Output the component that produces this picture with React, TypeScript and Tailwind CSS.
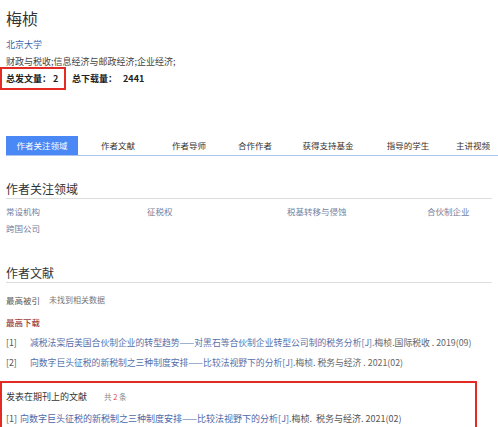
const tabs = [
  { t: '作者关注领域', w: 'w-[72px]' },
  { t: '作者文献', w: 'w-[80px]' },
  { t: '作者导师', w: 'w-[62px]' },
  { t: '合作作者', w: 'w-[70px]' },
  { t: '获得支持基金', w: 'w-[76px]' },
  { t: '指导的学生', w: 'w-[84px]' },
  { t: '主讲视频', w: 'w-[46px]' },
]

const fields = ['常设机构', '征税权', '税基转移与侵蚀', '合伙制企业', '跨国公司']

const downloads = [
  {
    n: '[1]',
    title: '减税法案后美国合伙制企业的转型趋势——对黑石等合伙制企业转型公司制的税务分析[J]. ',
    meta: '梅桢.国际税收 . 2019(09)',
  },
  {
    n: '[2]',
    title: '向数字巨头征税的新税制之三种制度安排——比较法视野下的分析[J]. ',
    meta: '梅桢. 税务与经济 . 2021(02)',
  },
]

export default function App() {
  return (
    <div
      className="relative w-[498px] h-[427px] overflow-hidden bg-white text-[#333]"
      style={{ fontFamily: '"Noto Sans CJK SC", "Noto Sans", sans-serif' }}
    >
      <div className="px-[6px]">
        <div className="h-[36px] flex items-center text-[16px] text-[#333]">梅桢</div>
        <div className="h-[18px] flex items-center text-[9px] text-[#3d62ad]">北京大学</div>
        <div className="h-[16px] flex items-center text-[9px] text-[#444]">
          财政与税收;信息经济与邮政经济;企业经济;
        </div>
        <div className="h-[18px] flex items-center text-[9px] font-bold text-[#222]">
          <span className="w-[66px]">
            总发文量：<span className="ml-[2px]">2</span>
          </span>
          <span>
            总下载量：<span className="ml-[6px]">2441</span>
          </span>
        </div>

        {/* tabs */}
        <div className="mt-[48px] -mr-[6px] flex h-[20px] border-b border-[#a9c4ee] overflow-hidden">
          {tabs.map((tab, i) => (
            <div
              key={tab.t}
              className={`shrink-0 ${tab.w} flex items-center justify-center text-[8.5px] ${
                i === 0 ? 'bg-[#4a89f5] text-white' : 'text-[#333]'
              }`}
            >
              {tab.t}
            </div>
          ))}
        </div>

        {/* 作者关注领域 */}
        <div className="mt-[23px] h-[20px] flex items-center text-[12px] text-[#333] border-b border-[#ddd]">
          作者关注领域
        </div>
        <div className="mt-[4px] grid grid-cols-[141px_140px_140px_140px]">
          {fields.map((f) => (
            <div key={f} className="h-[17px] flex items-center text-[8.5px] text-[#7482a3]">
              {f}
            </div>
          ))}
        </div>

        {/* 作者文献 */}
        <div className="mt-[26px] h-[20px] flex items-center text-[12px] text-[#333] border-b border-[#ddd]">
          作者文献
        </div>
        <div className="mt-[8px] h-[18px] flex items-center text-[8.5px] text-[#555]">
          <span className="w-[43px]">最高被引</span>
          <span className="text-[8px] text-[#777]">未找到相关数据</span>
        </div>
        <div className="mt-[4px] h-[18px] flex items-center text-[8.5px] font-medium text-[#a0403c]">
          最高下载
        </div>
        {downloads.map((d, i) => (
          <div
            key={d.n}
            className={`${i === 0 ? 'mt-[3px]' : 'mt-[2px]'} h-[18px] flex items-center text-[8.8px] whitespace-nowrap`}
          >
            <span className="w-[24px] text-[#555]">{d.n}</span>
            <span className="text-[#5670aa]">{d.title}</span>
            <span className="text-[#666]">{d.meta}</span>
          </div>
        ))}

        {/* 期刊文献 */}
        <div className="mt-[16px] h-[18px] flex items-center text-[9px] text-[#333]">
          <span className="w-[98px]">发表在期刊上的文献</span>
          <span className="text-[7.5px] text-[#888]">
            共 <span className="text-[#e0443c]">2</span> 条
          </span>
        </div>
        <div className="mt-[4px] h-[18px] flex items-center text-[9px] whitespace-nowrap">
          <span className="w-[14px] text-[#555]">[1]</span>
          <span className="text-[#4d69a8]">向数字巨头征税的新税制之三种制度安排——比较法视野下的分析[J]. </span>
          <span className="text-[#555]">梅桢.&nbsp; 税务与经济. 2021(02)</span>
        </div>
      </div>

      {/* annotation boxes */}
      <div className="absolute left-0 top-[67px] w-[66px] h-[23px] border-2 border-[#e32b24]" />
      <div className="absolute left-0 top-[381px] w-[477px] h-[60px] border-2 border-[#e32b24]" />
    </div>
  )
}
